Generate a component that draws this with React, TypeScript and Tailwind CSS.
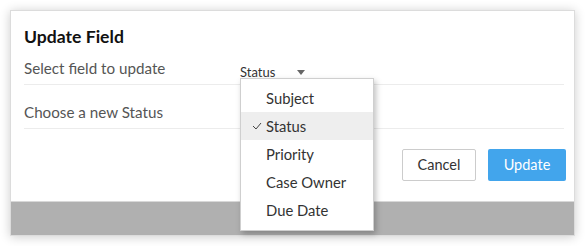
import React from 'react'

const OPTIONS = ['Subject', 'Status', 'Priority', 'Case Owner', 'Due Date']

function Caret() {
  return (
    <svg width="8" height="5" viewBox="0 0 8 5" className="fill-[#666]">
      <path d="M0 0h8L4 5z" />
    </svg>
  )
}

function Check() {
  return (
    <svg width="10" height="8" viewBox="0 0 10 8" fill="none" className="stroke-[#444]">
      <path d="M1 4l3 3 5-6" strokeWidth="1" />
    </svg>
  )
}

export default function App() {
  const selected = 'Status'
  return (
    <div className="w-[585px] h-[246px] bg-white pt-[10px] pl-[10px] font-['Lato','Liberation_Sans',sans-serif]">
      <div className="w-[565px] h-[226px] border border-[#dcdcdc] shadow-[0_1px_10px_rgba(0,0,0,0.2)] flex flex-col">
        <div className="flex-1 bg-white pl-[13px] pr-[10px] pt-[16px]">
          <h1 className="text-[17.6px] leading-[20px] font-bold text-[#111]">Update Field</h1>
          <div className="mt-[11px] flex items-start h-[27px] border-b border-[#ececec]">
            <div className="w-[216px] text-[15.2px] leading-[20px] text-[#555]">Select field to update</div>
            <div className="relative">
              <div className="flex items-center gap-[22px] pt-[5px] text-[13px] leading-[18px] text-[#333]">
                <span>Status</span>
                <Caret />
              </div>
              <div className="absolute left-0 top-[20px] z-10 w-[134px] bg-white border border-[#cfcfcf] shadow-[2px_3px_6px_rgba(0,0,0,0.25)] pt-[5px] pb-[6px]">
                {OPTIONS.map((o) => (
                  <div
                    key={o}
                    className={`h-[28px] flex items-center text-[14.8px] text-[#333] ${o === selected ? 'bg-[#eeeeee]' : ''}`}
                  >
                    <span className="w-[25px] flex justify-end pr-[4px]">{o === selected && <Check />}</span>
                    <span>{o}</span>
                  </div>
                ))}
              </div>
            </div>
          </div>
          <div className="flex items-center h-[44px] border-b border-[#ececec] text-[15.2px] leading-[20px] text-[#555] pt-[10px]">
            Choose a new Status
          </div>
          <div className="flex justify-end gap-[12px] mt-[20px] -mr-[2px]">
            <button className="w-[74px] h-[32px] border border-[#cccccc] rounded-[2px] bg-white text-[14.5px] text-[#333]">
              Cancel
            </button>
            <button className="w-[78px] h-[32px] rounded-[2px] bg-[#42a5ec] text-[14.5px] text-white">
              Update
            </button>
          </div>
        </div>
        <div className="h-[34px] bg-[#b0b0b0] border-t border-[#d8d8d8]" />
      </div>
    </div>
  )
}
